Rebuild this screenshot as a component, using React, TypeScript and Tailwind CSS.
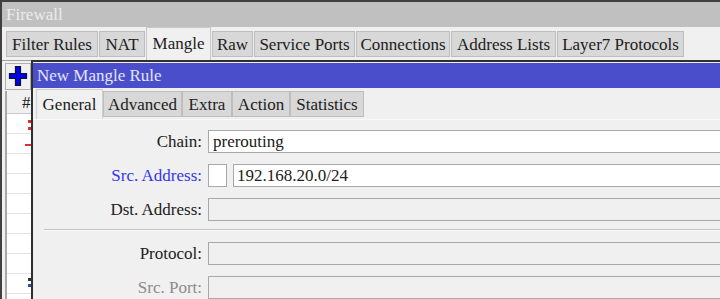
import React from "react";

const topTabs: { label: string; w: number; active?: boolean }[] = [
  { label: "Filter Rules", w: 92 },
  { label: "NAT", w: 46 },
  { label: "Mangle", w: 65, active: true },
  { label: "Raw", w: 41 },
  { label: "Service Ports", w: 101 },
  { label: "Connections", w: 94 },
  { label: "Address Lists", w: 105 },
  { label: "Layer7 Protocols", w: 127 },
];

const dlgTabs: { label: string; w: number; active?: boolean }[] = [
  { label: "General", w: 67, active: true },
  { label: "Advanced", w: 79 },
  { label: "Extra", w: 50 },
  { label: "Action", w: 58 },
  { label: "Statistics", w: 74 },
];

function Tab({ label, w, active }: { label: string; w: number; active?: boolean }) {
  return (
    <div
      style={{ width: w }}
      className={
        active
          ? "h-[33px] shrink-0 bg-[#f0f0f0] border border-b-0 border-[#c8c8c8] flex items-center justify-center text-[#202020] pb-[2px] whitespace-nowrap"
          : "mt-[4px] h-[26px] shrink-0 bg-[#d8d8d8] border border-[#bdbdbd] flex items-center justify-center text-[#202020] whitespace-nowrap"
      }
    >
      {label}
    </div>
  );
}

function DlgTab({ label, w, active }: { label: string; w: number; active?: boolean }) {
  return (
    <div
      style={{ width: w }}
      className={
        active
          ? "h-[30px] shrink-0 bg-[#f0f0f0] border border-b-0 border-[#d0d0d0] flex items-center justify-center text-[#202020] whitespace-nowrap"
          : "mt-[2px] h-[26px] shrink-0 bg-[#d8d8d8] border border-[#bdbdbd] flex items-center justify-center text-[#202020] whitespace-nowrap"
      }
    >
      {label}
    </div>
  );
}

function Row({
  label,
  color,
  children,
}: {
  label: string;
  color: string;
  children: React.ReactNode;
}) {
  return (
    <div className="flex items-center h-[23px]">
      <div className={`w-[166px] text-right shrink-0 whitespace-nowrap ${color}`}>{label}</div>
      <div className="ml-[6px] flex-1 flex h-[23px]">{children}</div>
    </div>
  );
}

export default function App() {
  return (
    <div
      className="relative w-[720px] h-[299px] overflow-hidden bg-[#f0f0f0] text-[17px] leading-none"
      style={{ fontFamily: '"Liberation Serif", "Times New Roman", serif' }}
    >
      {/* Firewall window */}
      <div className="flex flex-col h-full border-t-2 border-l-2 border-[#404040]">
        <div className="h-[25px] bg-[#c0c0c0] flex items-center pl-[4px] text-[#ececec] shrink-0">
          Firewall
        </div>
        <div className="flex h-[33px] pl-[4px] gap-[1px] shrink-0">
          {topTabs.map((t) => (
            <Tab key={t.label} {...t} />
          ))}
        </div>
        <div className="h-[1px] bg-[#a0a0a0] shrink-0" />
        <div className="flex h-[30px] pl-[3px] items-center shrink-0">
          <div className="w-[26px] h-[27px] border border-[#b0b0b0] bg-[#f0f0f0] flex items-center justify-center">
            <svg width="20" height="22" viewBox="0 0 20 22">
              <path
                d="M7.5 1.5 H12.5 V8.5 H18.5 V13.5 H12.5 V20.5 H7.5 V13.5 H1.5 V8.5 H7.5 Z"
                fill="#0000e0"
                stroke="#101030"
                strokeWidth="1.2"
              />
            </svg>
          </div>
        </div>
        {/* list */}
        <div className="ml-[3px] flex-1 border-l-2 border-[#a8a8a8] bg-white flex flex-col">
          <div className="h-[23px] bg-[#f0f0f0] border-b border-[#c8c8c8] flex items-center pl-[15px] text-[#202020]">
            #
          </div>
          {[0, 1, 2, 3, 4, 5, 6, 7, 8].map((i) => (
            <div key={i} className="h-[20px] border-b border-[#e4e4e4] relative shrink-0">
              {i === 0 && (
                <>
                  <div className="absolute left-[21px] top-[6px] w-[3px] h-[3px] bg-[#e03030]" />
                  <div className="absolute left-[21px] top-[13px] w-[3px] h-[3px] bg-[#e03030]" />
                </>
              )}
              {i === 1 && <div className="absolute left-[18px] top-[10px] w-[6px] h-[2px] bg-[#e03030]" />}
              {i === 8 && (
                <>
                  <div className="absolute left-[21px] top-[4px] w-[3px] h-[3px] bg-[#303030]" />
                  <div className="absolute left-[21px] top-[10px] w-[3px] h-[3px] bg-[#3050a0]" />
                </>
              )}
            </div>
          ))}
        </div>
      </div>

      {/* Dialog window */}
      <div className="absolute left-[31px] top-[60px] w-[700px] h-[250px] border-l-2 border-t-2 border-[#303030] bg-[#f0f0f0] flex flex-col">
        <div className="h-[1px] bg-[#f0f0f0] shrink-0" />
        <div className="h-[25px] bg-[#4b4ecb] flex items-center pl-[4px] text-[#e4e4fa] shrink-0">
          New Mangle Rule
        </div>
        <div className="flex h-[30px] pl-[3px] mt-[1px] shrink-0">
          {dlgTabs.map((t) => (
            <DlgTab key={t.label} {...t} />
          ))}
        </div>
        <div className="h-[1px] bg-[#f8f8f8] shrink-0" />
        <div className="flex flex-col pt-[10px] gap-[11px] pl-[3px]">
          <Row label="Chain:" color="text-[#202020]">
            <div className="flex-1 bg-white border border-[#a8a8a8] flex items-center pl-[4px] text-[#202020]">
              prerouting
            </div>
          </Row>
          <Row label="Src. Address:" color="text-[#3434f0]">
            <div className="w-[19px] bg-white border border-[#a8a8a8] shrink-0" />
            <div className="ml-[6px] flex-1 bg-white border border-[#a8a8a8] flex items-center pl-[3px] text-[#202020]">
              192.168.20.0/24
            </div>
          </Row>
          <Row label="Dst. Address:" color="text-[#202020]">
            <div className="flex-1 bg-[#f0f0f0] border border-[#a8a8a8]" />
          </Row>
        </div>
        <div className="ml-[11px] mt-[8px] h-[2px] border-t border-[#c4c4c4] border-b border-b-[#fafafa] shrink-0" />
        <div className="flex flex-col pt-[11px] gap-[11px] pl-[3px]">
          <Row label="Protocol:" color="text-[#202020]">
            <div className="flex-1 bg-[#f0f0f0] border border-[#a8a8a8]" />
          </Row>
          <Row label="Src. Port:" color="text-[#8c8c8c]">
            <div className="flex-1 bg-[#f0f0f0] border border-[#a8a8a8]" />
          </Row>
        </div>
      </div>
    </div>
  );
}
